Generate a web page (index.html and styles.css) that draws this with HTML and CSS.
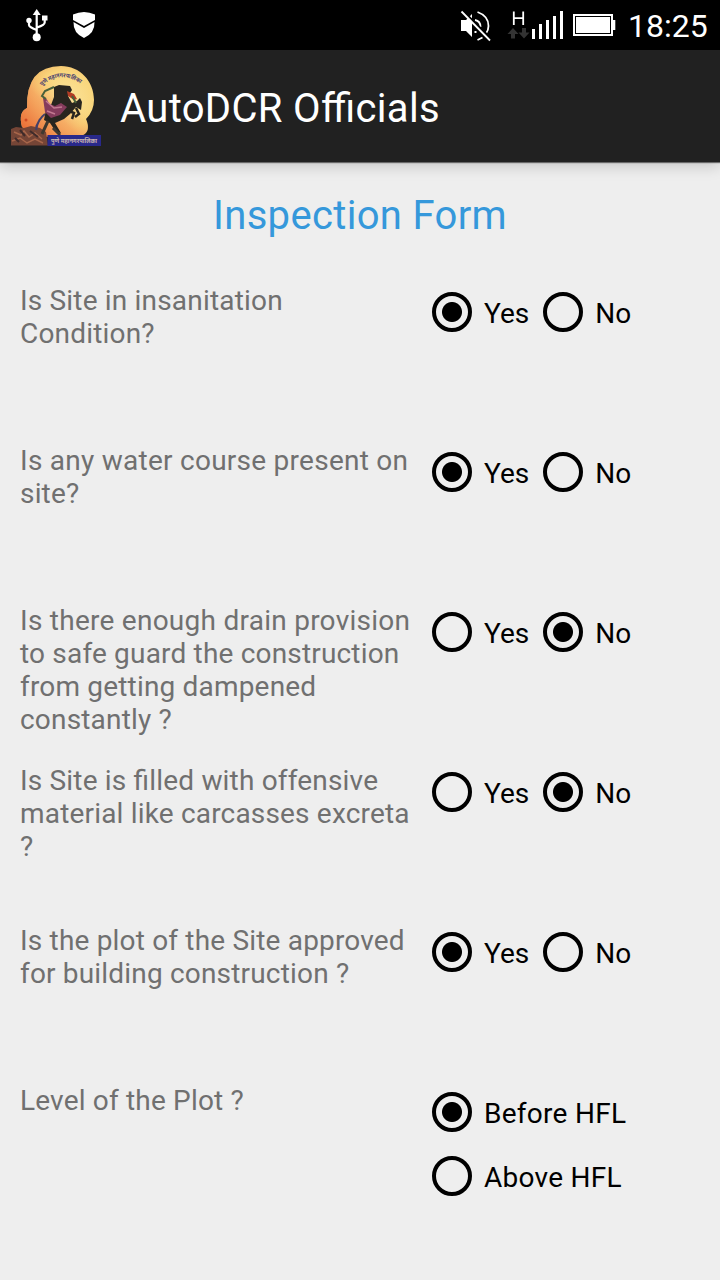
FILE: index.html
```html
<!DOCTYPE html>
<html lang="en">
<head>
    <meta charset="UTF-8">
    <meta name="viewport" content="width=device-width, initial-scale=1.0">
    <title>AutoDCR Officials</title>
    <link rel="stylesheet" href="styles.css">
</head>
<body>

    <div class="status-bar">
        <svg class="status-left" width="120" height="50" viewBox="0 0 120 50">
            <!-- usb -->
            <path d="M36.7 36V13M29 21v4q0 2 7.700 5M44.700 18v4.500q0 2.500-7.700 5" fill="none" stroke="#fff" stroke-width="2.200"/>
            <path d="M36.700 9l4 6h-8z" fill="#fff"/>
            <circle cx="29" cy="20.500" r="2.700" fill="#fff"/>
            <rect x="42" y="15.500" width="5.500" height="5" fill="#fff"/>
            <circle cx="36.700" cy="37.200" r="4" fill="#fff"/>
            <!-- shield -->
            <path d="M73 14.500Q84 9.500 95 14.500V20L84 26 73 20z" fill="#fff"/>
            <path d="M73.500 22L84 28 94.500 22Q95 33 84 38 73 33 73.500 22z" fill="#fff"/>
        </svg>
        <svg class="status-right" width="180" height="50" viewBox="440 0 180 50">
            <!-- muted speaker -->
            <path d="M461 20h5l6-6v23l-6-6h-5z" fill="#fff"/>
            <g fill="none" stroke="#fff" stroke-width="1.800">
                <path d="M477.500 12Q488.500 16 488.500 26 488.500 30 486 33.500M482.500 37.500L477.500 40"/>
                <path d="M475 20Q480.500 21 480.500 27M474.500 32h2"/>
            </g>
            <path d="M463 11.500L492 40" stroke="#000" stroke-width="3"/>
            <path d="M461.500 11.500L490 40.500" stroke="#fff" stroke-width="1.800"/>
            <!-- mobile data -->
            <path d="M513.800 11.500V25M523.200 11.500V25M513.800 18.200h9.400" stroke="#fff" stroke-width="1.800"/>
            <path d="M513 28l5.500 6h-3.500v4.500h-4V34h-3.500zM524 38.500l5.500-6H526V28h-4v4.500h-3.500z" fill="#333"/>
            <path d="M533.500 39V29M540.500 39V24M547.500 39V20M554.500 39V16M561.500 39V11" stroke="#fff" stroke-width="3"/>
            <!-- battery -->
            <rect x="574" y="15" width="38" height="20" fill="none" stroke="#fff" stroke-width="2"/>
            <rect x="576" y="17" width="34" height="16" fill="#fff"/>
            <rect x="613" y="20" width="2.300" height="10" fill="#fff"/>
        </svg>
        <span class="clock">18:25</span>
    </div>

    <div class="action-bar">
        <svg class="logo" width="92" height="82" viewBox="10 65 92 82">
            <defs>
                <radialGradient id="sun" cx="60%" cy="48%" r="58%">
                    <stop offset="0" stop-color="#fbe5a0"/>
                    <stop offset="0.7" stop-color="#f9d67c"/>
                    <stop offset="1" stop-color="#f2b968"/>
                </radialGradient>
                <linearGradient id="glow" x1="0" y1="1" x2="1" y2="0">
                    <stop offset="0" stop-color="#e8602c"/>
                    <stop offset="0.4" stop-color="#f49a58" stop-opacity="0.7"/>
                    <stop offset="0.65" stop-color="#f9d878" stop-opacity="0"/>
                </linearGradient>
                <path id="sky" d="M61 66C80 66 94 81 94 100Q94 111 86 119 91 131 83 135L38 137 22 127Q18 112 27 108 26 66 61 66z"/>
                <path id="arc" d="M42 86Q61 69 82 85"/>
            </defs>
            <use href="#sky" fill="url(#sun)"/>
            <use href="#sky" fill="url(#glow)"/>
            <!-- ground -->
            <path d="M11 129l5-2 8 1 7-2 9 2 6 4 2 13.500H11z" fill="#754536"/>
            <path d="M14 132l7 3 3-4 5 6 6-4 7 6M12 141l8-3 7 5 8-4 8 4" fill="none" stroke="#a8664a" stroke-width="1.500"/>
            <path d="M20 130l5 6M30 131l8 6M15 138l4 4" stroke="#3f2b2a" stroke-width="2"/>
            <circle cx="26" cy="120" r="1.500" fill="#cf4b23"/>
            <!-- horse and rider -->
            <path d="M45 114Q38 119 36 130M40 119l-4 8" fill="none" stroke="#42406a" stroke-width="2"/>
            <path d="M54 87l5-2 11 1 2 4-4 6 4 7 5-2 3-3 2 4-1 8-5-3-6 7-6 5-9 4 6 10-5-1-6-9-6-3 2-10 5-5 3-8z" fill="#28251f"/>
            <path d="M43 98q4-1 6 6l6 2 6-3 6 4-7 8-9 3-6-6z" fill="#853b5c"/>
            <path d="M46 101l8 7 8-1M47 111l8 3" fill="none" stroke="#c27991" stroke-width="1.500"/>
            <path d="M69 111l5 2-2 6M76 108l3 6-4 3" fill="none" stroke="#28251f" stroke-width="2.500"/>
            <path d="M67 91l7 3 3 5-3 1-6-4z" fill="#b33c24"/>
            <path d="M54 87l-9 4-3 5 4 3M72 96l4 7" fill="none" stroke="#49613c" stroke-width="2"/>
            <path d="M48 121l-6 13M53 128l7 7" stroke="#3f382f" stroke-width="3"/>
            <text class="logo-arc" textLength="42" lengthAdjust="spacingAndGlyphs"><textPath href="#arc" textLength="42" lengthAdjust="spacingAndGlyphs">पुणे महानगरपालिका</textPath></text>
            <rect x="47.500" y="135" width="53.500" height="11" fill="#29298b"/>
            <text class="logo-name" x="51" y="143" textLength="46" lengthAdjust="spacingAndGlyphs">पुणे महानगरपालिका</text>
        </svg>
        <span class="app-title">AutoDCR Officials</span>
    </div>

    <form class="form">
        <h1>Inspection Form</h1>

        <div class="row">
            <p class="question">Is Site in insanitation<br>Condition?</p>
            <div class="options">
                <label><input type="radio" name="q1" checked>Yes</label>
                <label><input type="radio" name="q1">No</label>
            </div>
        </div>

        <div class="row">
            <p class="question wide">Is any water course present on<br>site?</p>
            <div class="options">
                <label><input type="radio" name="q2" checked>Yes</label>
                <label><input type="radio" name="q2">No</label>
            </div>
        </div>

        <div class="row">
            <p class="question wide">Is there enough drain provision<br>to safe guard the construction<br>from getting dampened<br>constantly ?</p>
            <div class="options">
                <label><input type="radio" name="q3">Yes</label>
                <label><input type="radio" name="q3" checked>No</label>
            </div>
        </div>

        <div class="row">
            <p class="question">Is Site is filled with offensive<br>material like carcasses excreta<br>?</p>
            <div class="options">
                <label><input type="radio" name="q4">Yes</label>
                <label><input type="radio" name="q4" checked>No</label>
            </div>
        </div>

        <div class="row">
            <p class="question">Is the plot of the Site approved<br>for building construction ?</p>
            <div class="options">
                <label><input type="radio" name="q5" checked>Yes</label>
                <label><input type="radio" name="q5">No</label>
            </div>
        </div>

        <div class="row">
            <p class="question">Level of the Plot ?</p>
            <div class="options vertical">
                <label><input type="radio" name="q6" checked>Before HFL</label>
                <label><input type="radio" name="q6">Above HFL</label>
            </div>
        </div>
    </form>

</body>
</html>
```
FILE: styles.css
```css
* {
    box-sizing: border-box;
}

body {
    margin: 0;
    height: 1280px;
    overflow: hidden;
    background-color: #eeeeee;
    font-family: Roboto, "Noto Sans", sans-serif;
    font-feature-settings: "liga" 1;
}

.status-bar {
    display: flex;
    height: 50px;
    background-color: #000;
    color: #fff;
}

.status-right {
    margin-left: 320px;
}

.clock {
    padding-left: 8px;
    font-size: 32px;
    line-height: 52px;
    white-space: nowrap;
}

.action-bar {
    display: flex;
    align-items: center;
    height: 112px;
    padding-left: 10px;
    background-color: #212121;
    color: #fff;
    box-shadow: 0 1px 1px rgba(0,0,0,0.5), 0 4px 14px rgba(0,0,0,0.18);
}

.logo-arc {
    font-family: "Noto Sans", sans-serif;
    font-size: 6px;
    font-weight: bold;
    fill: #49406f;
}

.logo-name {
    font-family: "Noto Sans", sans-serif;
    font-size: 6.5px;
    font-weight: bold;
    fill: #c9b6b0;
}

.app-title {
    padding: 4px 0 0 18px;
    font-size: 40px;
    letter-spacing: 0.35px;
}

.form {
    padding: 31px 0 0 20px;
}

h1 {
    margin: 0 20px 41px 0;
    color: #3598db;
    font-size: 40px;
    font-weight: normal;
    line-height: 46px;
    letter-spacing: 0.33px;
    text-align: center;
}

.row {
    display: flex;
    height: 160px;
}

.question {
    width: 412px;
    margin: 4px 0 0;
    color: #707070;
    font-size: 28px;
    line-height: 33px;
    letter-spacing: 0.18px;
    white-space: nowrap;
}

.question.wide::first-line {
    letter-spacing: 0.26px;
}

.options {
    display: flex;
    align-items: flex-start;
}

.options.vertical {
    flex-direction: column;
    letter-spacing: 0.27px;
}

label {
    display: flex;
    align-items: center;
    height: 64px;
    margin-right: 14px;
    color: #000;
    font-size: 28px;
    line-height: 33px;
    padding-top: 2px;
}

input {
    appearance: none;
    width: 40px;
    height: 40px;
    margin: -2px 12px 0 0;
    border: 4px solid #000;
    border-radius: 50%;
}

input:checked {
    background: radial-gradient(circle, #000 9.5px, transparent 10.5px);
}
```
